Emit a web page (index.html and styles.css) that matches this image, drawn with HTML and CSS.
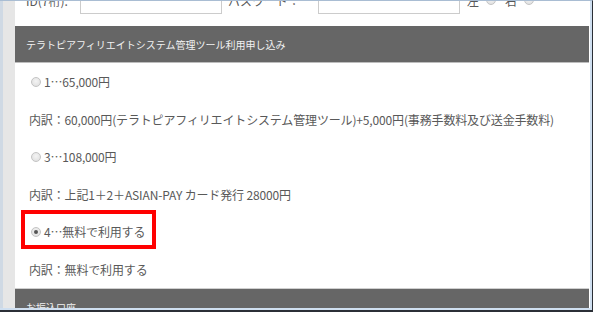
FILE: index.html
```html
<!DOCTYPE html>
<html lang="ja">
<head>
<meta charset="utf-8">
<title>テラトピアフィリエイトシステム管理ツール利用申し込み</title>
<link rel="stylesheet" href="styles.css">
</head>
<body>
<div class="frame">
  <div class="side"></div>
  <div class="panel">
    <div class="toprow">
      <span class="lbl lbl-id">ID(7桁):</span>
      <span class="field field-id"></span>
      <span class="lbl lbl-pw">パスワード：</span>
      <span class="field field-pw"></span>
      <span class="lr">左</span><span class="radio"></span>
      <span class="lr">右</span><span class="radio"></span>
    </div>
    <div class="bar">テラトピアフィリエイトシステム管理ツール利用申し込み</div>
    <div class="rows">
      <div class="row"><span class="radio"></span><span class="opt">1…65,000円</span></div>
      <div class="row">内訳：60,000円(テラトピアフィリエイトシステム管理ツール)+5,000円(事務手数料及び送金手数料)</div>
      <div class="row"><span class="radio"></span><span class="opt">3…108,000円</span></div>
      <div class="row">内訳：上記1＋2＋ASIAN-PAY カード発行 28000円</div>
      <div class="row row-marked"><span class="radio radio-on"></span><span class="opt">4…無料で利用する</span><span class="mark"></span></div>
      <div class="row">内訳：無料で利用する</div>
    </div>
    <div class="bar bar-next">お振込口座</div>
  </div>
</div>
</body>
</html>
```
FILE: styles.css
```css
html, body {
  margin: 0;
  padding: 0;
}
body {
  width: 593px;
  height: 312px;
  overflow: hidden;
  background: #2b2f36;
  font-family: "Noto Sans CJK JP", "Noto Sans", sans-serif;
  color: #595959;
}
.frame {
  box-sizing: border-box;
  width: 593px;
  height: 312px;
  display: flex;
  border-top: 1px solid #a9bdd3;
  border-right: 1px solid #2b2f36;
  border-bottom: 2px solid #2b2f36;
  background: #cfdff0;
  padding: 0 2px 2px 0;
}
.side {
  width: 15px;
  flex: none;
  box-sizing: border-box;
  border-left: 3px solid #cfd9e4;
  background: #e6e6e6;
}
.panel {
  flex: 1;
  background: #fff;
  overflow: hidden;
  border-right: 1px solid #fff;
}
.toprow {
  display: flex;
  align-items: center;
  height: 30px;
  margin-top: -16px;
  margin-bottom: 11px;
  font-size: 12px;
  padding-left: 11px;
}
.lbl-id { width: 54px; }
.field {
  box-sizing: border-box;
  height: 28px;
  width: 142px;
  border: 1px solid #ccc;
  background: #fff;
}
.lbl-pw { width: 96px; padding-left: 6px; box-sizing: border-box; }
.lr { margin-left: 7px; margin-right: 7px; }
.toprow .lr + .radio { margin-right: 2px; }
.bar {
  height: 36px;
  background: #666;
  color: #f2f2f2;
  font-size: 10px;
  display: flex;
  align-items: center;
  padding-left: 11px;
  border-bottom: 1px solid #bdbdbd;
}
.bar-next {
  border-bottom: none;
  border-top: 1px solid #cfcfcf;
}
.rows {
  padding-left: 14px;
  font-size: 12px;
  letter-spacing: -0.15px;
}
.row {
  height: 37.5px;
  display: flex;
  align-items: center;
  position: relative;
  white-space: nowrap;
}
.radio {
  box-sizing: border-box;
  width: 10px;
  height: 10px;
  border-radius: 50%;
  border: 1px solid #c4c4c4;
  background: radial-gradient(circle at 50% 40%, #f4f4f4 0%, #dcdcdc 100%);
  flex: none;
  position: relative;
}
.rows .radio { margin-left: 2px; margin-right: 3px; }
.radio-on::after {
  content: "";
  position: absolute;
  left: 2px;
  top: 2px;
  width: 4px;
  height: 4px;
  border-radius: 50%;
  background: #555;
}
.mark {
  position: absolute;
  left: -8px;
  top: -3px;
  width: 135px;
  height: 39px;
  box-sizing: border-box;
  border: 4px solid #f00;
}
```
